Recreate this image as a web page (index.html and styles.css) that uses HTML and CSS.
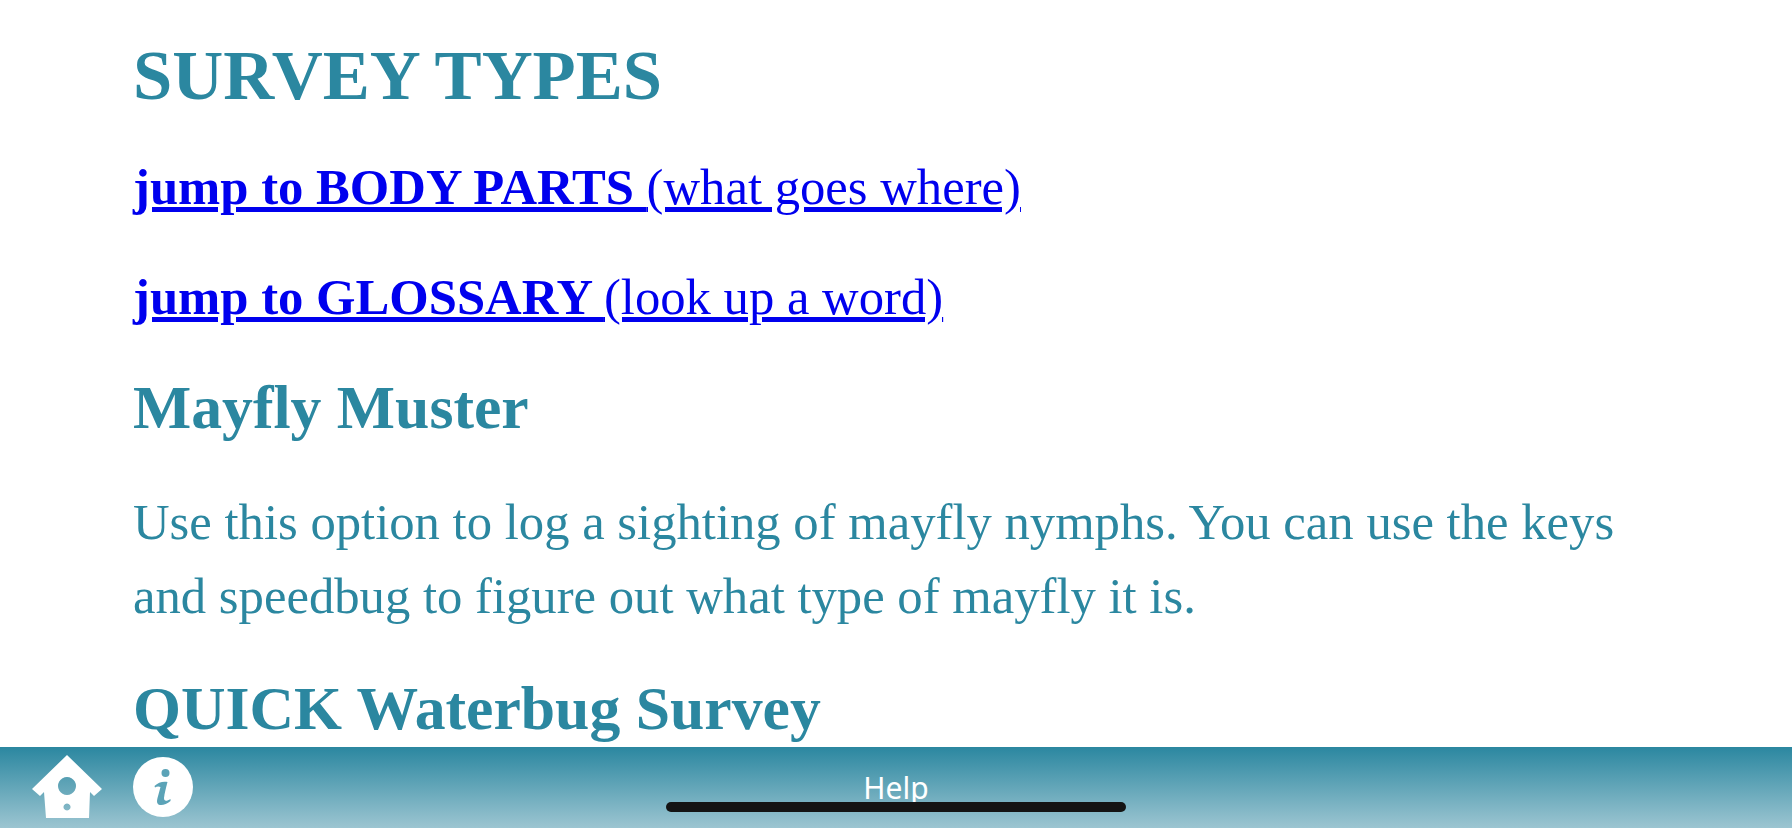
FILE: index.html
```html
<!DOCTYPE html>
<html lang="en">
  <head>
    <meta charset="UTF-8" />
    <title>Help</title>
    <link rel="stylesheet" href="styles.css">
  </head>

  <body>
    <main class="content">
      <h1>SURVEY TYPES</h1>
      <p class="jump"><a href="#parts"><b>jump to BODY PARTS </b>(what goes where)</a></p>
      <p class="jump"><a href="#glossary"><b>jump to GLOSSARY </b>(look up a word)</a></p>
      <h2>Mayfly Muster</h2>
      <p class="copy">Use this option to log a sighting of mayfly nymphs. You can use the keys and speedbug to figure out what type of mayfly it is.</p>
      <h2>QUICK Waterbug Survey</h2>
    </main>

    <footer class="toolbar">
      <a class="tool-icon" href="#home">
        <svg width="72" height="66" viewBox="0 0 72 66">
          <path class="white" fill-rule="evenodd" d="M35 0 L70 34 L62 41 L58 37 L57 63 L14 63 L12 37 L8 41 L0 34 Z M35 22 a9 9 0 1 0 0.01 0 Z M35 48.5 a3.5 3.5 0 1 0 0.01 0 Z"/>
        </svg>
      </a>
      <a class="tool-icon info" href="#info">
        <svg width="60" height="60" viewBox="0 0 60 60">
          <circle class="white" cx="30" cy="30" r="30"/>
          <circle class="teal" cx="32.5" cy="16" r="4"/>
          <path class="teal" d="M21.5 29 C25 25.5 30 24 34.5 25 C33 31 31.5 36 31 41 C31 44.5 33.5 44.5 37.5 42 L37.5 44 C34 47 30 48.5 27 48 C24 47.5 23.5 45 24.5 41 L27.5 30 C25.5 29 23.5 29.5 22 30.5 Z"/>
        </svg>
      </a>
      <span class="toolbar-title">Help</span>
      <span class="home-bar"></span>
    </footer>
  </body>
</html>
```

FILE: styles.css
```css
html,
body {
  margin: 0;
  height: 100%;
  overflow: hidden;
  background: #fff;
}

body {
  display: flex;
  flex-direction: column;
  font-family: "Liberation Serif", serif;
  color: #2b87a0;
}

.content {
  flex: 1;
  min-height: 0;
  overflow: hidden;
  padding: 30px 150px 0 133px;
}

h1 {
  margin: 0 0 30px;
  font-size: 70.6px;
  line-height: 90px;
}

h2 {
  margin: 0;
  font-size: 61.7px;
  line-height: 76px;
}

.jump {
  margin: 0 0 35.5px;
  font-size: 50.7px;
  line-height: 74px;
}

.jump a {
  color: #0000ee;
}

.copy {
  margin: 40px 0 37px;
  font-size: 50.7px;
  line-height: 74px;
}

.toolbar {
  position: relative;
  flex: none;
  height: 81px;
  display: flex;
  align-items: flex-start;
  gap: 29px;
  padding: 8px 0 0 32px;
  box-sizing: border-box;
  background: linear-gradient(#2b87a0, #9cc5d1);
}

.tool-icon {
  display: block;
  height: 66px;
}

.tool-icon.info {
  margin-top: 2px;
}

.white {
  fill: #fff;
}

.teal {
  fill: #5ba3b7;
}

.toolbar-title {
  position: absolute;
  left: 0;
  right: 0;
  top: 23px;
  text-align: center;
  font-family: "Noto Sans", sans-serif;
  font-size: 30px;
  line-height: 36px;
  color: #fff;
}

.home-bar {
  position: absolute;
  left: 666px;
  top: 55px;
  width: 460px;
  height: 10px;
  border-radius: 5px;
  background: #141414;
}
```
